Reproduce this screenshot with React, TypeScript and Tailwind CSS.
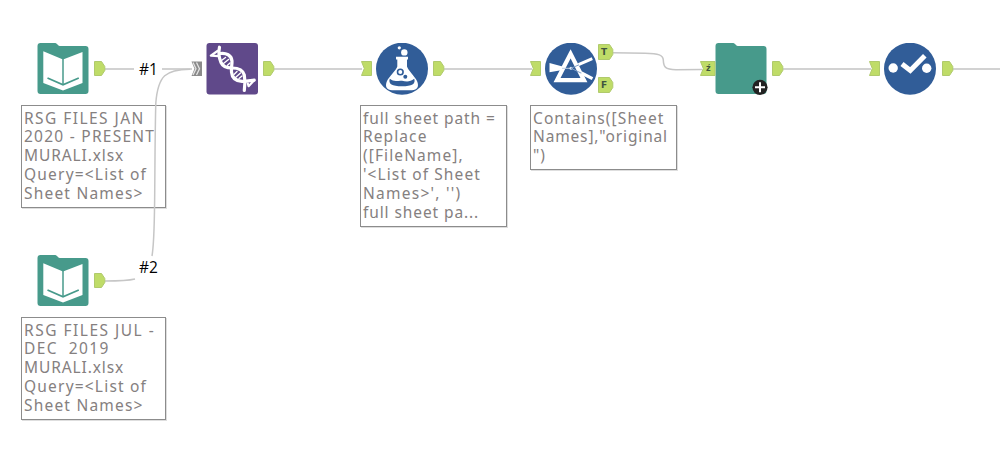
import type { ReactNode } from "react";

function ToolIcon({ children }: { children: ReactNode }) {
  return (
    <svg className="h-[52px] w-[52px] shrink-0" viewBox="0 0 52 52" fill="none">
      {children}
    </svg>
  );
}

const FOLDER =
  "M3.5 0H17.5C19 0 19.5 0.5 20.5 1.5C21.5 2.5 22.2 3 24 3H48.5A3 3 0 0 1 51.5 6V48A3 3 0 0 1 48.5 51H3.5A3 3 0 0 1 0.5 48V3A3 3 0 0 1 3.5 0Z";

function InputTool() {
  return (
    <ToolIcon>
      <path d={FOLDER} fill="#479a8b" />
      <path d="M6.3 8.2L26 16.5L45.5 9V40L26 47.5L6.3 40Z" fill="white" />
      <path d="M26 16V42" stroke="#479a8b" strokeWidth="1.5" />
      <path d="M10.5 35L26 41.8L41.8 35" stroke="#479a8b" strokeWidth="1.8" />
    </ToolIcon>
  );
}

function DnaTool() {
  return (
    <ToolIcon>
      <rect x="0.5" y="0" width="51.5" height="51.5" rx="3" fill="#60498a" />
      <g stroke="white" strokeLinecap="round" strokeLinejoin="round">
        <path d="M13.5 4.2C12.5 9 13 15 15 19.5C17 24 21 25 26 25C32 25 37 27 38.3 32C39.3 37 39.2 42 38.3 47.5" strokeWidth="3.2" />
        <path d="M11.5 8L4.8 12.6L12.5 13.2" strokeWidth="2.2" />
        <path d="M14.5 10.5C20 9.8 25.5 12 26 18C26.2 22 25 24.5 25.5 29C26 35 30 38 36 38.3C41 38.5 44.5 37.5 48.2 37.2" strokeWidth="3.2" />
        <path d="M48.2 37.2L42.6 43.2L41.8 40.5" strokeWidth="2.2" />
        <path d="M16.2 17L19.5 14.5M17.5 20.5L22.5 16.5M21.5 22.2L24 20M28 31.5L31 28.5M29.5 34.5L34.5 30M33 35.5L36 33" strokeWidth="1.4" />
      </g>
    </ToolIcon>
  );
}

function FormulaTool() {
  return (
    <ToolIcon>
      <circle cx="26" cy="25.7" r="26" fill="#315d98" />
      <circle cx="23.3" cy="4.8" r="1.6" fill="white" />
      <circle cx="28.3" cy="9.4" r="3.2" fill="white" />
      <path
        d="M20 13.8H32V16.5H31V23.5C32 27 39 34 41 38C43.5 44 41 47.2 36 47.2H16C11 47.2 8.5 44 11 38C13 34 20.3 27 21.3 23.5V16.5H20Z"
        fill="white"
      />
      <path d="M13.8 35.8C18 39.5 22 37.3 26 37.8C30 38.6 34 39.3 38.2 35.8C40 41 36 43.3 26 43.3S12 41 13.8 35.8Z" fill="#315d98" />
      <circle cx="24.3" cy="29" r="2.8" stroke="#315d98" strokeWidth="1.6" />
      <circle cx="29.3" cy="33.7" r="2" fill="#315d98" />
    </ToolIcon>
  );
}

function FilterTool() {
  return (
    <ToolIcon>
      <circle cx="26" cy="25.7" r="26" fill="#315d98" />
      <path d="M25.6 10.8L12 37.2H39Z" stroke="white" strokeWidth="4.2" />
      <path d="M4.5 20L17.5 23.5V27L4.5 29.3Z" fill="white" />
      <path d="M17 25.3H26" stroke="#b9cbe2" />
      <circle cx="26" cy="25.3" r="1.5" fill="#dce6f2" />
      <path d="M26 25.3L34 21.8M26 25.3L37 30.5" stroke="#7f9fc8" />
      <path d="M33.5 21.7L47.3 15.7" stroke="white" strokeWidth="3" />
      <path d="M36.5 30L47.5 35.7" stroke="white" strokeWidth="3.2" />
    </ToolIcon>
  );
}

function MacroTool() {
  return (
    <ToolIcon>
      <path d={FOLDER} fill="#479a8b" />
    </ToolIcon>
  );
}

function SelectTool() {
  return (
    <ToolIcon>
      <circle cx="26" cy="25.7" r="26" fill="#315d98" />
      <circle cx="9.2" cy="25" r="4.7" fill="white" />
      <circle cx="42.7" cy="25.2" r="4.7" fill="white" />
      <path d="M18 21L26.3 27.5L40.8 12.7" stroke="white" strokeWidth="5" />
    </ToolIcon>
  );
}

// Output anchors point right, input anchors are notched on the left
function OutAnchor({ x, y = 61 }: { x: number; y?: number }) {
  return <path d={`M${x + 0.5} ${y + 0.5}h7l3.3 5v4l-3.3 5h-7z`} fill="#bfdc68" stroke="#b0ca6c" />;
}

function InAnchor({ x, w = 10 }: { x: number; w?: number }) {
  return <path d={`M${x + 0.5} 61.5h${w}v14h-${w}l2.8-7z`} fill="#bfdc68" stroke="#b0ca6c" />;
}

function Wires() {
  return (
    <svg className="absolute inset-0" width="1000" height="465" fill="none">
      <path
        d="M105 69H134M162 69H192M274 69H362M444 69H532M783 69H871M952 69H1000"
        stroke="#d2d2d2"
        strokeWidth="2"
      />
      <g stroke="#c6c6c6" strokeWidth="1.5">
        <path d="M190 69.2C166 69.5 158 75 155.8 103C154.8 140 155 190 154.4 215C154 235 153.7 246 152 256" />
        <path d="M105 281C118 281 127 281 135 279" />
        <path d="M613 52.7L645 53.3C659 53.5 663 55 663.3 60C663.5 67 665 69.5 676 69.7L702 69.5" />
      </g>
      <OutAnchor x={94} />
      <OutAnchor x={94} y={273} />
      <OutAnchor x={263} />
      <InAnchor x={361} />
      <OutAnchor x={433} />
      <InAnchor x={530} />
      <path d="M598.5 44.5h11l3.3 5v5l-3.3 5h-11zM598.5 77.5h11l3.3 5v5l-3.3 5h-11z" fill="#bfdc68" stroke="#b0ca6c" />
      <InAnchor x={700} w={14.5} />
      <OutAnchor x={772} />
      <InAnchor x={869} />
      <OutAnchor x={942} />
      <path d="M191.5 61.5H202V76H191.5L194.5 68.7Z" fill="#8b8b8b" />
      <path d="M193 62.5L196 68.7L193 75M196.5 62.5L199.5 68.7L196.5 75" stroke="#e4e4e4" strokeWidth="1.3" />
    </svg>
  );
}

function Note({ className, children }: { className: string; children: ReactNode }) {
  return (
    <div
      className={`flex flex-col border border-[#8c8c8c] bg-white pt-[2.5px] pl-[2px] font-['Noto_Sans','DejaVu_Sans',sans-serif] text-[15.5px] leading-[18.9px] tracking-[0.9px] whitespace-pre text-[#858080] shadow-[1px_1px_0_#dedede] ${className}`}
    >
      {children}
    </div>
  );
}

export default function App() {
  return (
    <main className="relative h-[465px] w-[1000px] overflow-hidden bg-white">
      <div className="absolute top-[43px] left-[21px] flex flex-col items-start gap-2.5">
        <div className="flex pl-4">
          <InputTool />
        </div>
        <Note className="h-[103px] w-[145px]">
          <div className="tracking-[1.45px]">RSG FILES JAN</div>
          <div className="tracking-[1.25px]">2020 - PRESENT</div>
          <div>MURALI.xlsx</div>
          <div className="tracking-[1.2px]">{"Query=<List of"}</div>
          <div className="tracking-[1.2px]">{"Sheet Names>"}</div>
        </Note>
      </div>

      <div className="absolute top-[255px] left-[21px] flex flex-col items-start gap-2.5">
        <div className="flex pl-4">
          <InputTool />
        </div>
        <Note className="h-[103px] w-[145px]">
          <div className="tracking-[1.5px]">RSG FILES JUL -</div>
          <div className="tracking-[1.4px]">{"DEC  2019"}</div>
          <div>MURALI.xlsx</div>
          <div className="tracking-[1.2px]">{"Query=<List of"}</div>
          <div className="tracking-[1.2px]">{"Sheet Names>"}</div>
        </Note>
      </div>

      <div className="absolute top-[43px] left-[206px] flex">
        <DnaTool />
      </div>

      <div className="absolute top-[43px] left-[360px] flex flex-col items-start gap-2.5">
        <div className="flex pl-4">
          <FormulaTool />
        </div>
        <Note className="h-[122px] w-[147px]">
          <div>full sheet path =</div>
          <div className="tracking-[1.1px]">Replace</div>
          <div className="tracking-[1.1px]">([FileName],</div>
          <div className="tracking-[1.1px]">{"'<List of Sheet"}</div>
          <div className="tracking-[1.25px]">{"Names>', '')"}</div>
          <div>full sheet pa...</div>
        </Note>
      </div>

      <div className="absolute top-[43px] left-[530px] flex flex-col items-start gap-2.5">
        <div className="flex pl-[15px]">
          <FilterTool />
        </div>
        <Note className="h-[65px] w-[147px]">
          <div className="tracking-[1.1px]">Contains([Sheet</div>
          <div className="tracking-[0.85px]">{'Names],"original'}</div>
          <div>{'")'}</div>
        </Note>
      </div>

      <div className="absolute top-[43px] left-[715px] flex">
        <MacroTool />
      </div>

      <div className="absolute top-[43px] left-[884px] flex">
        <SelectTool />
      </div>

      <Wires />

      {/* Macro badge */}
      <svg className="absolute top-[79px] left-[752px]" width="16" height="16" viewBox="0 0 16 16">
        <circle cx="8" cy="8.3" r="7.6" fill="#222222" />
        <path d="M8 3.3V13.3M3 8.3H13" stroke="white" strokeWidth="2" />
      </svg>

      {/* Anchor letters */}
      <div className="absolute top-[46px] left-[601px] flex flex-col gap-[21px] font-['DejaVu_Sans',sans-serif] text-[9px] leading-[12px] font-bold text-[#3f5540]">
        <span>T</span>
        <span>F</span>
      </div>
      <span className="absolute top-[63px] left-[706px] font-['DejaVu_Sans',sans-serif] text-[8px] leading-[11px] font-bold text-[#3f5540]">
        ź
      </span>

      {/* Connection labels */}
      <span className="absolute top-[59px] left-[139px] font-['Open_Sans',sans-serif] text-[15.5px] leading-[20px] text-black">#1</span>
      <span className="absolute top-[257px] left-[139px] font-['Open_Sans',sans-serif] text-[15.5px] leading-[20px] text-black">#2</span>
    </main>
  );
}
